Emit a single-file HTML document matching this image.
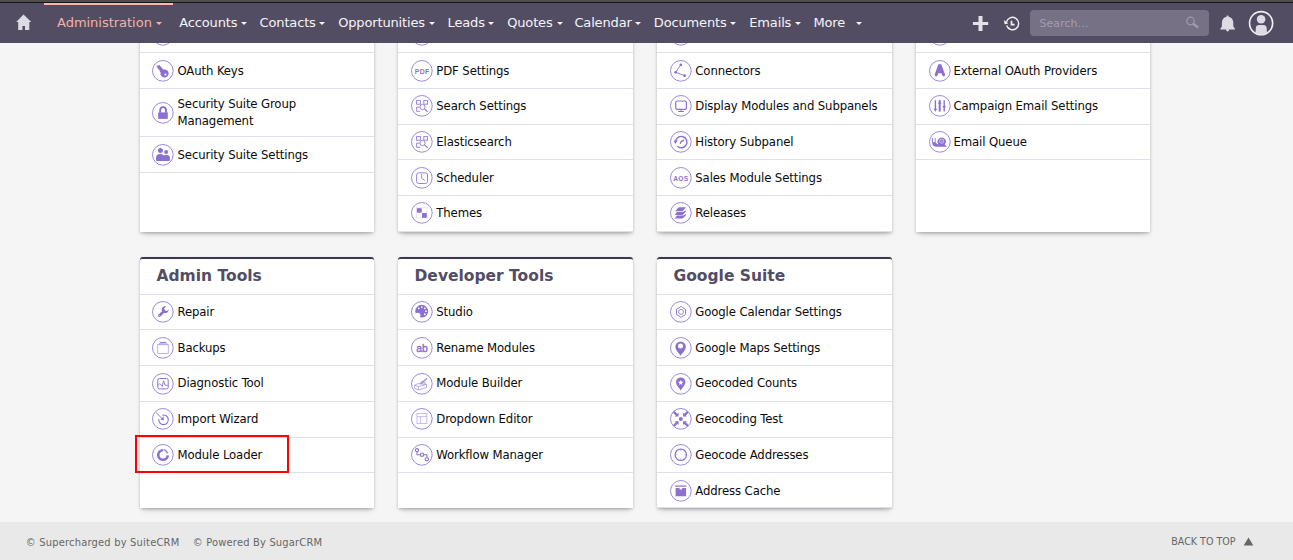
<!DOCTYPE html>
<html lang="en">
<head>
<meta charset="utf-8">
<title>Administration</title>
<style>
*{box-sizing:border-box;margin:0;padding:0}
html,body{width:1293px;height:560px;overflow:hidden}
body{background:#f5f5f5;font-family:"DejaVu Sans","Liberation Sans",sans-serif;font-size:13px;color:#1a1a1a;position:relative}
#topline{position:absolute;left:0;top:0;width:1293px;height:3px;background:#4d4d4d;border-bottom:1px solid #161616;z-index:6}
#nav{position:absolute;left:0;top:0;width:1293px;height:42.5px;background:#534d64;z-index:5}
#nav .active-bar{position:absolute;left:44px;top:3px;width:129px;height:2px;background:#ffb6ab}
#nav .mi{position:absolute;top:15.4px;font-size:13px;line-height:16px;color:#f5f4f8;white-space:nowrap;letter-spacing:-.15px}
#nav .mi.act{color:#f7b0a6}
#nav .caret{display:inline-block;width:0;height:0;border-left:3px solid transparent;border-right:3px solid transparent;border-top:3px solid currentColor;margin-left:4px;vertical-align:2px}
#nav svg{position:absolute}
#search{position:absolute;left:1030px;top:10px;width:179px;height:25.5px;border-radius:4px;background:#777186}
#search span{position:absolute;left:9.5px;top:5.5px;font-size:11px;line-height:16px;color:#a29eb2;letter-spacing:.05px}
.panel{position:absolute;background:#fff;box-shadow:0 1px 3px rgba(0,0,0,.2),0 4px 6px -3px rgba(0,0,0,.25);z-index:1}
.panel.hd{border-top:2px solid #3c3650;border-radius:3px 3px 0 0}
h3{position:absolute;z-index:2;font-size:15.5px;font-weight:bold;color:#534d64;height:35px;line-height:33px;white-space:nowrap;letter-spacing:0}
.ln{position:absolute;height:1px;background:#dde2e9;z-index:2}
.it{position:absolute;width:22px;height:22px;z-index:2}
.it svg{display:block}
.tx{position:absolute;z-index:2;font-family:"DejaVu Sans Condensed","DejaVu Sans","Liberation Sans",sans-serif;font-stretch:condensed;font-size:13px;line-height:18px;white-space:nowrap;letter-spacing:-.12px;color:#0a0a0a}
.tx.two{line-height:17px}
#footer{position:absolute;left:0;top:522px;width:1293px;height:38px;background:#e9e9e9;z-index:3;font-family:"DejaVu Sans Condensed","DejaVu Sans",sans-serif;font-stretch:condensed;font-size:11px;color:#666}
#footer span{position:absolute;white-space:nowrap;line-height:14px}
#hl{position:absolute;left:135px;top:435px;width:154px;height:38px;border:2px solid #ff0000;z-index:4}
</style>
</head>
<body>
<div id="nav">
<div class="active-bar"></div>
<svg style="left:15px;top:14px" width="17" height="17" viewBox="0 0 17 17"><path d="M8.5 0.6 L16.3 7.9 H14.3 V16 H10 V12 H7.4 V16 H3.2 V7.9 H1.2 Z" fill="#dddbe3"/></svg>
<div class="mi act" style="left:57px;letter-spacing:-.02px">Administration<span class="caret"></span></div>
<div class="mi" style="left:179.3px">Accounts<span class="caret"></span></div>
<div class="mi" style="left:259.6px">Contacts<span class="caret" style="margin-left:3px"></span></div>
<div class="mi" style="left:338.2px">Opportunities<span class="caret"></span></div>
<div class="mi" style="left:447.6px">Leads<span class="caret" style="margin-left:3px"></span></div>
<div class="mi" style="left:507.2px">Quotes<span class="caret"></span></div>
<div class="mi" style="left:574.4px">Calendar<span class="caret" style="margin-left:3px"></span></div>
<div class="mi" style="left:653.8px">Documents<span class="caret" style="margin-left:3px"></span></div>
<div class="mi" style="left:749.3px">Emails<span class="caret"></span></div>
<div class="mi" style="left:813.4px">More<span class="caret" style="margin-left:11px"></span></div>
<svg style="left:972px;top:15px" width="18" height="18" viewBox="0 0 18 18"><path d="M6.5 1 H10.5 V7 H16.2 V10.1 H10.5 V16 H6.5 V10.1 H0.9 V7 H6.5 Z" fill="#e4e2e9"/></svg>
<svg style="left:1003px;top:15.3px" width="18" height="18" viewBox="0 0 18 18"><g fill="none" stroke="#f1f0f4"><path d="M3.4 7.2 A6.2 6.2 0 1 1 3.6 10.6" stroke-width="1.4"/><path d="M8.5 5.8 V9.7 H11.6" stroke-width="1.7"/></g><path d="M0.9 5 L5.4 8.6 L1.6 9.2 Z" fill="#f1f0f4"/></svg>
<div id="search"><span>Search...</span>
<svg style="left:155.4px;top:6px" width="15" height="14" viewBox="0 0 15 14"><circle cx="5.5" cy="5" r="3.8" fill="none" stroke="#a09bae" stroke-width="1.2"/><path d="M8.4 8 L12.4 11" stroke="#a09bae" stroke-width="2.2" stroke-linecap="round"/></svg></div>
<svg style="left:1219px;top:14px" width="18" height="19" viewBox="0 0 18 19"><path d="M8.6 1.6 C9.3 1.6 9.6 2.1 9.6 2.8 C12.6 3.4 14.3 5.8 14.3 8.8 V12 Q14.5 13.4 15.9 14.4 V15.4 H1.4 V14.4 Q2.8 13.4 2.9 12 V8.8 C2.9 5.8 4.6 3.4 7.6 2.8 C7.6 2.1 7.9 1.6 8.6 1.6 Z" fill="#dddbe3"/><circle cx="8.6" cy="16" r="1.45" fill="#dddbe3"/></svg>
<svg style="left:1248px;top:10px" width="26" height="26" viewBox="0 0 26 26"><defs><clipPath id="av"><circle cx="13.1" cy="13.2" r="11.4"/></clipPath></defs><circle cx="13.1" cy="13.2" r="11.55" fill="none" stroke="#f1f0f4" stroke-width="1.6"/><circle cx="13.1" cy="9.3" r="4.25" fill="#dddbe3"/><path d="M7.3 26 L7.8 18.2 Q8 15 11.2 15 H15.2 Q18.4 15 18.7 18.2 L19.2 26 Z" fill="#dddbe3" clip-path="url(#av)"/></svg>
</div>
<div id="topline"></div>
<div class="panel" style="left:140px;top:30px;width:234px;height:202px"></div>
<div class="it" style="left:152.15px;top:24px"><svg class="ic" viewBox="0 0 22 22" width="22" height="22" ><circle cx="10.85" cy="10.85" r="10.35" fill="#fff" stroke="#9d89db" stroke-width="1"/></svg></div>
<div class="ln" style="left:140px;top:52px;width:234px"></div>
<div class="it" style="left:152.15px;top:60px"><svg class="ic" viewBox="0 0 22 22" width="22" height="22" ><circle cx="10.85" cy="10.85" r="10.35" fill="#fff" stroke="#9d89db" stroke-width="1"/><path d="M4.9 5.6 L7.6 5.2 L11.3 9.6 A4.1 4.1 0 1 1 8.6 12.4 L7.6 11.2 L7.9 10.2 L6.7 10.1 L6.9 9 L5.6 8.7 L5.8 7.6 L4.7 7.2 Z" fill="#8b70d0"/><circle cx="13.4" cy="14.5" r="1.1" fill="#fff"/></svg></div>
<div class="tx" style="left:177.5px;top:61.5px">OAuth Keys</div>
<div class="ln" style="left:140px;top:88px;width:234px"></div>
<div class="it" style="left:152.15px;top:102px"><svg class="ic" viewBox="0 0 22 22" width="22" height="22" ><circle cx="10.85" cy="10.85" r="10.35" fill="#fff" stroke="#9d89db" stroke-width="1"/><rect x="6.2" y="10.4" width="9.6" height="6.5" fill="#8b70d0"/><path d="M8.2 10.8 V8 A2.9 2.9 0 0 1 14 8 V10.8" fill="none" stroke="#8b70d0" stroke-width="1.9"/></svg></div>
<div class="tx two" style="left:177.5px;top:94.5px">Security Suite Group<br>Management</div>
<div class="ln" style="left:140px;top:136px;width:234px"></div>
<div class="it" style="left:152.15px;top:144px"><svg class="ic" viewBox="0 0 22 22" width="22" height="22" ><circle cx="10.85" cy="10.85" r="10.35" fill="#fff" stroke="#9d89db" stroke-width="1"/><circle cx="8.4" cy="6.4" r="2.5" fill="#8b70d0"/><circle cx="14.1" cy="8.05" r="2" fill="#8b70d0"/><path d="M4 15.9 V14 A4 4 0 0 1 8 10.1 H9.2 A4 4 0 0 1 11.6 11.6 A3.5 3.5 0 0 1 13.6 11 H14.6 A3.4 3.4 0 0 1 18 14.4 V15.9 Q18 16.9 17 16.9 H5 Q4 16.9 4 15.9 Z" fill="#8b70d0"/></svg></div>
<div class="tx" style="left:177.5px;top:145.5px">Security Suite Settings</div>
<div class="ln" style="left:140px;top:172px;width:234px"></div>
<div class="panel" style="left:398px;top:30px;width:235px;height:202px"></div>
<div class="it" style="left:411.1px;top:24px"><svg class="ic" viewBox="0 0 22 22" width="22" height="22" ><circle cx="10.85" cy="10.85" r="10.35" fill="#fff" stroke="#9d89db" stroke-width="1"/></svg></div>
<div class="ln" style="left:398px;top:52px;width:235px"></div>
<div class="it" style="left:411.1px;top:60px"><svg class="ic" viewBox="0 0 22 22" width="22" height="22" ><circle cx="10.85" cy="10.85" r="10.35" fill="#fff" stroke="#9d89db" stroke-width="1"/><text x="11.1" y="13.5" text-anchor="middle" font-family="Liberation Sans, DejaVu Sans, sans-serif" font-weight="bold" font-size="6.9" letter-spacing=".3" fill="#8b70d0">PDF</text></svg></div>
<div class="tx" style="left:436.3px;top:61.5px">PDF Settings</div>
<div class="ln" style="left:398px;top:88px;width:235px"></div>
<div class="it" style="left:411.1px;top:95px"><svg class="ic" viewBox="0 0 22 22" width="22" height="22" ><circle cx="10.85" cy="10.85" r="10.35" fill="#fff" stroke="#9d89db" stroke-width="1"/><g fill="none" stroke="#8b70d0" stroke-width=".9" opacity=".92"><rect x="5.6" y="5.6" width="3.8" height="3.6"/><rect x="12.8" y="5.6" width="3.7" height="3.6"/><path d="M9.2 16.3 H5.6 V12.2 H8.6"/><circle cx="11.5" cy="12" r="2.6" fill="#fff"/><path d="M13.4 13.9 L16.6 16.7" stroke-width="1.2"/></g></svg></div>
<div class="tx" style="left:436.3px;top:96.5px">Search Settings</div>
<div class="ln" style="left:398px;top:124px;width:235px"></div>
<div class="it" style="left:411.1px;top:131px"><svg class="ic" viewBox="0 0 22 22" width="22" height="22" ><circle cx="10.85" cy="10.85" r="10.35" fill="#fff" stroke="#9d89db" stroke-width="1"/><g fill="none" stroke="#8b70d0" stroke-width=".9" opacity=".92"><rect x="5.6" y="5.6" width="3.8" height="3.6"/><rect x="12.8" y="5.6" width="3.7" height="3.6"/><path d="M9.2 16.3 H5.6 V12.2 H8.6"/><circle cx="11.5" cy="12" r="2.6" fill="#fff"/><path d="M13.4 13.9 L16.6 16.7" stroke-width="1.2"/></g></svg></div>
<div class="tx" style="left:436.3px;top:132.5px">Elasticsearch</div>
<div class="ln" style="left:398px;top:159px;width:235px"></div>
<div class="it" style="left:411.1px;top:167px"><svg class="ic" viewBox="0 0 22 22" width="22" height="22" ><circle cx="10.85" cy="10.85" r="10.35" fill="#fff" stroke="#9d89db" stroke-width="1"/><g fill="none" stroke="#8b70d0" stroke-width="1" opacity=".85"><rect x="5.6" y="5.8" width="10.9" height="10.7" rx="2.2"/><path d="M10.7 7.2 V11.3 L13.6 13.3" stroke-linecap="round"/></g></svg></div>
<div class="tx" style="left:436.3px;top:168.5px">Scheduler</div>
<div class="ln" style="left:398px;top:195px;width:235px"></div>
<div class="it" style="left:411.1px;top:202px"><svg class="ic" viewBox="0 0 22 22" width="22" height="22" ><circle cx="10.85" cy="10.85" r="10.35" fill="#fff" stroke="#9d89db" stroke-width="1"/><rect x="5.5" y="5.6" width="10.5" height="10.2" fill="none" stroke="#8b70d0" stroke-width=".6" opacity=".25"/><rect x="5.9" y="6.2" width="4.8" height="4.5" fill="#8b70d0"/><rect x="11" y="11" width="4.8" height="4.8" fill="#8b70d0"/></svg></div>
<div class="tx" style="left:436.3px;top:203.5px">Themes</div>
<div class="ln" style="left:398px;top:231px;width:235px"></div>
<div class="panel" style="left:657px;top:30px;width:235px;height:202px"></div>
<div class="it" style="left:670.1px;top:24px"><svg class="ic" viewBox="0 0 22 22" width="22" height="22" ><circle cx="10.85" cy="10.85" r="10.35" fill="#fff" stroke="#9d89db" stroke-width="1"/></svg></div>
<div class="ln" style="left:657px;top:52px;width:235px"></div>
<div class="it" style="left:670.1px;top:60px"><svg class="ic" viewBox="0 0 22 22" width="22" height="22" ><circle cx="10.85" cy="10.85" r="10.35" fill="#fff" stroke="#9d89db" stroke-width="1"/><path d="M10.8 4.8 L5.6 12.3 L14.6 15.7" fill="none" stroke="#8b70d0" stroke-width=".9"/><circle cx="10.8" cy="4.8" r="1.4" fill="#8b70d0"/><circle cx="5.6" cy="12.3" r="1.4" fill="#8b70d0"/><circle cx="14.6" cy="15.7" r="1.4" fill="#8b70d0"/></svg></div>
<div class="tx" style="left:695.3px;top:61.5px">Connectors</div>
<div class="ln" style="left:657px;top:88px;width:235px"></div>
<div class="it" style="left:670.1px;top:95px"><svg class="ic" viewBox="0 0 22 22" width="22" height="22" ><circle cx="10.85" cy="10.85" r="10.35" fill="#fff" stroke="#9d89db" stroke-width="1"/><g fill="none" stroke="#8b70d0"><rect x="5.7" y="6" width="10.7" height="8.3" rx="1.6" stroke-width="1.2"/><path d="M11 14.5 V16.3 M8 16.5 H14" stroke-width="1"/></g></svg></div>
<div class="tx" style="left:695.3px;top:96.5px">Display Modules and Subpanels</div>
<div class="ln" style="left:657px;top:124px;width:235px"></div>
<div class="it" style="left:670.1px;top:131px"><svg class="ic" viewBox="0 0 22 22" width="22" height="22" ><circle cx="10.85" cy="10.85" r="10.35" fill="#fff" stroke="#9d89db" stroke-width="1"/><path d="M5.6 10.2 A5.7 5.7 0 1 1 7.3 15.2" fill="none" stroke="#8b70d0" stroke-width="1.4"/><path d="M3.7 9.5 L7.8 9.3 L5.3 13 Z" fill="#8b70d0"/><path d="M10.4 12.2 Q10.5 10.2 13.6 9.3" fill="none" stroke="#8b70d0" stroke-width="1.4" stroke-linecap="round"/></svg></div>
<div class="tx" style="left:695.3px;top:132.5px">History Subpanel</div>
<div class="ln" style="left:657px;top:159px;width:235px"></div>
<div class="it" style="left:670.1px;top:167px"><svg class="ic" viewBox="0 0 22 22" width="22" height="22" ><circle cx="10.85" cy="10.85" r="10.35" fill="#fff" stroke="#9d89db" stroke-width="1"/><text x="10.9" y="13.7" text-anchor="middle" font-family="Liberation Sans, DejaVu Sans, sans-serif" font-weight="bold" font-size="6.7" letter-spacing=".2" fill="#8b70d0">AOS</text></svg></div>
<div class="tx" style="left:695.3px;top:168.5px">Sales Module Settings</div>
<div class="ln" style="left:657px;top:195px;width:235px"></div>
<div class="it" style="left:670.1px;top:202px"><svg class="ic" viewBox="0 0 22 22" width="22" height="22" ><circle cx="10.85" cy="10.85" r="10.35" fill="#fff" stroke="#9d89db" stroke-width="1"/><path d="M8.6 5.3 H16.1 L12.6 9.2 H5.1 Z" fill="#8b70d0"/><path d="M5.1 12.3 L7 9.9 L13.1 9.9 L16.1 8.3 L16.1 9.4 L12.6 12.9 H5.1 Z" fill="#8b70d0"/><path d="M5.1 16 L7 13.6 L13.1 13.6 L16.1 12 L16.1 13.1 L12.6 16.6 H5.1 Z" fill="#8b70d0"/></svg></div>
<div class="tx" style="left:695.3px;top:203.5px">Releases</div>
<div class="ln" style="left:657px;top:231px;width:235px"></div>
<div class="panel" style="left:916px;top:30px;width:234px;height:202px"></div>
<div class="it" style="left:929.05px;top:24px"><svg class="ic" viewBox="0 0 22 22" width="22" height="22" ><circle cx="10.85" cy="10.85" r="10.35" fill="#fff" stroke="#9d89db" stroke-width="1"/></svg></div>
<div class="ln" style="left:916px;top:52px;width:234px"></div>
<div class="it" style="left:929.05px;top:60px"><svg class="ic" viewBox="0 0 22 22" width="22" height="22" ><circle cx="10.85" cy="10.85" r="10.35" fill="#fff" stroke="#9d89db" stroke-width="1"/><path d="M9.2 4.6 Q10.8 3.5 12.4 4.6 L16.2 15.1 Q15.3 16.9 13.5 16.1 L12.6 13.3 H9.2 L8.2 16.1 Q6.4 16.9 5.6 15.1 Z" fill="#8b70d0"/></svg></div>
<div class="tx" style="left:953.5px;top:61.5px">External OAuth Providers</div>
<div class="ln" style="left:916px;top:88px;width:234px"></div>
<div class="it" style="left:929.05px;top:95px"><svg class="ic" viewBox="0 0 22 22" width="22" height="22" ><circle cx="10.85" cy="10.85" r="10.35" fill="#fff" stroke="#9d89db" stroke-width="1"/><g stroke="#8b70d0" fill="#8b70d0"><path d="M6.4 5.2 V15.5" stroke-width="1.4"/><path d="M4.6 13.8 H8.2 L6.4 16.8 Z" stroke="none"/><path d="M10.7 5.1 V16.6" stroke-width="2"/><path d="M8.8 8.8 L10.7 6 L12.6 8.8 Z" stroke="none"/><path d="M15.2 5.2 V16.6" stroke-width="1.4"/><path d="M13.3 11 H17.1 L15.2 13.6 Z" stroke="none"/></g></svg></div>
<div class="tx" style="left:953.5px;top:96.5px">Campaign Email Settings</div>
<div class="ln" style="left:916px;top:124px;width:234px"></div>
<div class="it" style="left:929.05px;top:131px"><svg class="ic" viewBox="0 0 22 22" width="22" height="22" ><circle cx="10.85" cy="10.85" r="10.35" fill="#fff" stroke="#9d89db" stroke-width="1"/><path d="M3.1 7 H4 V11 Q4.8 11.6 5.7 11 V7 H6.6 V11.6 Q7.6 13 9.6 13.4 A4.1 4.1 0 1 1 15.6 13.6 L18 15.7 H7 Q3.2 15.6 3.1 11.6 Z" fill="#8b70d0"/><circle cx="12.7" cy="10.1" r="2.1" fill="none" stroke="#fff" stroke-width=".7" opacity=".8"/><circle cx="12.9" cy="10.2" r=".6" fill="#fff" opacity=".7"/></svg></div>
<div class="tx" style="left:953.5px;top:132.5px">Email Queue</div>
<div class="ln" style="left:916px;top:159px;width:234px"></div>
<div class="panel hd" style="left:140px;top:257px;width:234px;height:251.2px"></div>
<h3 style="left:156.5px;top:260px">Admin Tools</h3>
<div class="ln" style="left:140px;top:294px;width:234px"></div>
<div class="it" style="left:152.15px;top:301px"><svg class="ic" viewBox="0 0 22 22" width="22" height="22" ><circle cx="10.85" cy="10.85" r="10.35" fill="#fff" stroke="#9d89db" stroke-width="1"/><path d="M7.4 14.5 L12 10.2" stroke="#8b70d0" stroke-width="2.7" stroke-linecap="round" fill="none"/><path d="M14.1 5.2 A3.5 3.5 0 1 0 16.7 8.6 L14.8 10 L12.7 9.4 L12.3 7.2 Z" fill="#8b70d0"/><circle cx="7.5" cy="14.4" r=".5" fill="#fff" opacity=".7"/></svg></div>
<div class="tx" style="left:177.5px;top:302.5px">Repair</div>
<div class="ln" style="left:140px;top:329px;width:234px"></div>
<div class="it" style="left:152.15px;top:337px"><svg class="ic" viewBox="0 0 22 22" width="22" height="22" ><circle cx="10.85" cy="10.85" r="10.35" fill="#fff" stroke="#9d89db" stroke-width="1"/><path d="M8.3 5.2 H13.7 L16.6 7.6 H5.4 Z" fill="#8b70d0" opacity=".45"/><path d="M8 5.4 H14" stroke="#8b70d0" stroke-width="1" opacity=".9"/><rect x="5.7" y="7.7" width="10.6" height="8.7" fill="none" stroke="#8b70d0" stroke-width=".9" opacity=".6"/></svg></div>
<div class="tx" style="left:177.5px;top:338.5px">Backups</div>
<div class="ln" style="left:140px;top:365px;width:234px"></div>
<div class="it" style="left:152.15px;top:373px"><svg class="ic" viewBox="0 0 22 22" width="22" height="22" ><circle cx="10.85" cy="10.85" r="10.35" fill="#fff" stroke="#9d89db" stroke-width="1"/><g fill="none" stroke="#8b70d0"><rect x="5.8" y="5.5" width="10.4" height="10.4" rx="1.6" stroke-width="1"/><path d="M6.2 12.2 L7.6 10.8 L8.9 11.6 L10.2 13.4 L11.6 7.8 L13.2 12.3 H15.6" stroke-width=".9" stroke-linejoin="round"/></g></svg></div>
<div class="tx" style="left:177.5px;top:373.5px">Diagnostic Tool</div>
<div class="ln" style="left:140px;top:401px;width:234px"></div>
<div class="it" style="left:152.15px;top:408px"><svg class="ic" viewBox="0 0 22 22" width="22" height="22" ><circle cx="10.85" cy="10.85" r="10.35" fill="#fff" stroke="#9d89db" stroke-width="1"/><path d="M4.3 4.9 L10.6 11" stroke="#8b70d0" stroke-width="1" fill="none"/><path d="M11.5 8.6 L11.9 12.2 L8.3 11.8 Z" fill="#8b70d0"/><path d="M10.2 7.2 A4.8 4.8 0 1 1 6.8 11" fill="none" stroke="#8b70d0" stroke-width="1.1"/></svg></div>
<div class="tx" style="left:177.5px;top:409.5px">Import Wizard</div>
<div class="ln" style="left:140px;top:437px;width:234px"></div>
<div class="it" style="left:152.15px;top:444px"><svg class="ic" viewBox="0 0 22 22" width="22" height="22" ><circle cx="10.85" cy="10.85" r="10.35" fill="#fff" stroke="#9d89db" stroke-width="1"/><path d="M10.9 6.2 A4.8 4.8 0 1 0 15.8 11.4" fill="none" stroke="#8b70d0" stroke-width="2.6"/><g stroke="#8b70d0" stroke-width="1.1"><path d="M12.4 5 L11.9 6.7 M14 5.8 L13.1 7.3 M15.2 7 L13.9 8.1 M16.1 8.6 L14.5 9.2"/></g></svg></div>
<div class="tx" style="left:177.5px;top:445.5px">Module Loader</div>
<div class="ln" style="left:140px;top:472px;width:234px"></div>
<div class="panel hd" style="left:398px;top:257px;width:235px;height:251.2px"></div>
<h3 style="left:414.5px;top:260px">Developer Tools</h3>
<div class="ln" style="left:398px;top:294px;width:235px"></div>
<div class="it" style="left:411.1px;top:301px"><svg class="ic" viewBox="0 0 22 22" width="22" height="22" ><circle cx="10.85" cy="10.85" r="10.35" fill="#fff" stroke="#9d89db" stroke-width="1"/><circle cx="10.7" cy="10.2" r="6.4" fill="#8b70d0"/><circle cx="6.7" cy="14.5" r="2.7" fill="#fff"/><g fill="#fff"><circle cx="7.75" cy="7.3" r=".9"/><circle cx="10.8" cy="6.1" r=".9"/><circle cx="13.75" cy="7.3" r=".9"/><circle cx="15" cy="10.2" r=".9"/><circle cx="13.75" cy="13.2" r=".9"/></g></svg></div>
<div class="tx" style="left:436.3px;top:302.5px">Studio</div>
<div class="ln" style="left:398px;top:329px;width:235px"></div>
<div class="it" style="left:411.1px;top:337px"><svg class="ic" viewBox="0 0 22 22" width="22" height="22" ><circle cx="10.85" cy="10.85" r="10.35" fill="#fff" stroke="#9d89db" stroke-width="1"/><text x="5.2" y="14.8" textLength="11.5" lengthAdjust="spacingAndGlyphs" font-family="Liberation Sans, DejaVu Sans, sans-serif" font-size="11.8" fill="#8b70d0" stroke="#8b70d0" stroke-width=".45">ab</text></svg></div>
<div class="tx" style="left:436.3px;top:338.5px">Rename Modules</div>
<div class="ln" style="left:398px;top:365px;width:235px"></div>
<div class="it" style="left:411.1px;top:373px"><svg class="ic" viewBox="0 0 22 22" width="22" height="22" ><circle cx="10.85" cy="10.85" r="10.35" fill="#fff" stroke="#9d89db" stroke-width="1"/><g fill="none" stroke="#8b70d0" stroke-width=".8" opacity=".7" stroke-linejoin="round"><path d="M3.6 12.2 L7 10.6 L15.6 11.4 L15.6 14.6 L7.4 16.9 L3.6 15.4 Z"/><path d="M3.6 12.2 L7.4 13.6 L15.6 11.4 M7.4 13.6 V16.9"/><path d="M8.6 10.8 L10.6 8.6 L14.6 9.8 L12.6 12"/></g><path d="M10.2 10.4 L15.6 5.8" stroke="#8b70d0" stroke-width="1.5" stroke-linecap="round" opacity=".75"/></svg></div>
<div class="tx" style="left:436.3px;top:373.5px">Module Builder</div>
<div class="ln" style="left:398px;top:401px;width:235px"></div>
<div class="it" style="left:411.1px;top:408px"><svg class="ic" viewBox="0 0 22 22" width="22" height="22" ><circle cx="10.85" cy="10.85" r="10.35" fill="#fff" stroke="#9d89db" stroke-width="1"/><g fill="none" stroke="#8b70d0" stroke-width=".9" opacity=".5"><rect x="6" y="5.6" width="9.8" height="9.9"/><path d="M6 8.6 H15.8 M9.4 8.6 V15.5"/></g></svg></div>
<div class="tx" style="left:436.3px;top:409.5px">Dropdown Editor</div>
<div class="ln" style="left:398px;top:437px;width:235px"></div>
<div class="it" style="left:411.1px;top:444px"><svg class="ic" viewBox="0 0 22 22" width="22" height="22" ><circle cx="10.85" cy="10.85" r="10.35" fill="#fff" stroke="#9d89db" stroke-width="1"/><g fill="none" stroke="#8b70d0" stroke-width="1.1"><path d="M6 7.8 V10.7 H9.2 M12.8 10.7 H15.9 V13.5"/><circle cx="6" cy="6.2" r="1.6"/><circle cx="11" cy="10.7" r="1.7"/><ellipse cx="15.9" cy="15.3" rx="1.8" ry="1.6"/></g></svg></div>
<div class="tx" style="left:436.3px;top:445.5px">Workflow Manager</div>
<div class="ln" style="left:398px;top:472px;width:235px"></div>
<div class="panel hd" style="left:657px;top:257px;width:235px;height:251.2px"></div>
<h3 style="left:673.5px;top:260px">Google Suite</h3>
<div class="ln" style="left:657px;top:294px;width:235px"></div>
<div class="it" style="left:670.1px;top:301px"><svg class="ic" viewBox="0 0 22 22" width="22" height="22" ><circle cx="10.85" cy="10.85" r="10.35" fill="#fff" stroke="#9d89db" stroke-width="1"/><g fill="none" stroke="#8b70d0" stroke-width=".95" stroke-linejoin="round"><path d="M11 5.5 Q11.8 5.5 12.4 6.6 L14.6 7.5 Q15.6 7.8 15.5 8.9 V12.8 Q15.5 13.8 14.6 14.2 L12.4 15.2 Q11.7 16.4 11 16.4 Q10.3 16.4 9.6 15.2 L7.4 14.2 Q6.5 13.8 6.5 12.8 V8.9 Q6.4 7.8 7.4 7.5 L9.6 6.6 Q10.2 5.5 11 5.5 Z"/><circle cx="11" cy="10.9" r="2.5" stroke-width=".95" opacity=".85"/></g></svg></div>
<div class="tx" style="left:695.3px;top:302.5px">Google Calendar Settings</div>
<div class="ln" style="left:657px;top:329px;width:235px"></div>
<div class="it" style="left:670.1px;top:337px"><svg class="ic" viewBox="0 0 22 22" width="22" height="22" ><circle cx="10.85" cy="10.85" r="10.35" fill="#fff" stroke="#9d89db" stroke-width="1"/><path d="M10.6 4.5 A5.2 5.2 0 0 1 15.8 9.7 C15.8 13 12 16.4 10.6 18.7 C9.2 16.4 5.4 13 5.4 9.7 A5.2 5.2 0 0 1 10.6 4.5 Z" fill="#8b70d0"/><circle cx="10.5" cy="9" r="2.5" fill="#fff"/></svg></div>
<div class="tx" style="left:695.3px;top:338.5px">Google Maps Settings</div>
<div class="ln" style="left:657px;top:365px;width:235px"></div>
<div class="it" style="left:670.1px;top:373px"><svg class="ic" viewBox="0 0 22 22" width="22" height="22" ><circle cx="10.85" cy="10.85" r="10.35" fill="#fff" stroke="#9d89db" stroke-width="1"/><path d="M10.7 4.4 A4.7 4.7 0 0 1 15.4 9.1 C15.4 12.2 12 15.2 10.7 17.4 C9.4 15.2 6 12.2 6 9.1 A4.7 4.7 0 0 1 10.7 4.4 Z" fill="#8b70d0"/><path d="M10.7 6.9 L11.55 8.6 L13.4 8.85 L12.05 10.15 L12.4 12 L10.7 11.1 L9 12 L9.35 10.15 L8 8.85 L9.85 8.6 Z" fill="#fff"/></svg></div>
<div class="tx" style="left:695.3px;top:373.5px">Geocoded Counts</div>
<div class="ln" style="left:657px;top:401px;width:235px"></div>
<div class="it" style="left:670.1px;top:408px"><svg class="ic" viewBox="0 0 22 22" width="22" height="22" ><circle cx="10.85" cy="10.85" r="10.35" fill="#fff" stroke="#9d89db" stroke-width="1"/><circle cx="10.8" cy="10.9" r="2" fill="#8b70d0"/><g stroke="#8b70d0" stroke-width="2.3"><path d="M3.7 3.8 L7.3 7.4 M17.9 3.8 L14.3 7.4 M3.7 18 L7.3 14.4 M17.9 18 L14.3 14.4"/></g><g fill="#8b70d0"><path d="M8.55 4.8 V8.6 H4.75 Z M13.05 4.8 V8.6 H16.85 Z M8.55 17 V13.2 H4.75 Z M13.05 17 V13.2 H16.85 Z"/></g></svg></div>
<div class="tx" style="left:695.3px;top:409.5px">Geocoding Test</div>
<div class="ln" style="left:657px;top:437px;width:235px"></div>
<div class="it" style="left:670.1px;top:444px"><svg class="ic" viewBox="0 0 22 22" width="22" height="22" ><circle cx="10.85" cy="10.85" r="10.35" fill="#fff" stroke="#9d89db" stroke-width="1"/><circle cx="10.8" cy="10.8" r="5.7" fill="none" stroke="#8b70d0" stroke-width="1.2"/><g stroke="#8b70d0" stroke-width="1" opacity=".5"><path d="M10.8 5.6 V7.4 M10.8 14.2 V16 M5.6 10.8 H7.4 M14.2 10.8 H16"/></g></svg></div>
<div class="tx" style="left:695.3px;top:445.5px">Geocode Addresses</div>
<div class="ln" style="left:657px;top:472px;width:235px"></div>
<div class="it" style="left:670.1px;top:480px"><svg class="ic" viewBox="0 0 22 22" width="22" height="22" ><circle cx="10.85" cy="10.85" r="10.35" fill="#fff" stroke="#9d89db" stroke-width="1"/><rect x="5.1" y="5.4" width="11.2" height="1.4" fill="#8b70d0" opacity=".9"/><path d="M5.6 8 H9.3 L9.9 9.5 H11.8 L12.4 8 H16.1 V16.3 H5.6 Z" fill="#8b70d0"/></svg></div>
<div class="tx" style="left:695.3px;top:481.5px">Address Cache</div>
<div class="ln" style="left:657px;top:507.2px;width:235px"></div>
<div id="hl"></div>
<div id="footer">
<span style="left:25.8px;top:14px;letter-spacing:.21px">© Supercharged by SuiteCRM</span>
<span style="left:192.8px;top:14px;letter-spacing:.2px">© Powered By SugarCRM</span>
<span style="left:1171.3px;top:12px;font-size:10.6px">BACK TO TOP</span>
<svg style="position:absolute;left:1243px;top:15px" width="11" height="9" viewBox="0 0 11 9"><path d="M5.5 0.4 L10.3 8.4 H0.7 Z" fill="#666"/></svg>
</div>
</body>
</html>
